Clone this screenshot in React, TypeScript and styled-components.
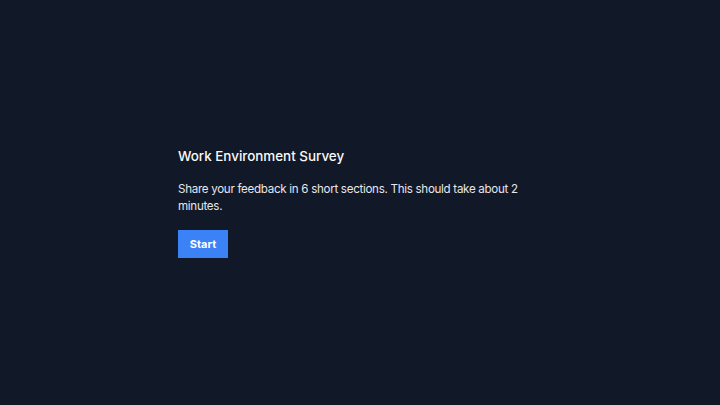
import React from "react";
import styled, { createGlobalStyle } from "styled-components";

const Global = createGlobalStyle`
  html, body { margin: 0; padding: 0; background: #111827; }
  body { font-family: Inter, "Noto Sans", sans-serif; }
  #root { min-height: 100vh; }
`;

const Page = styled.main`
  box-sizing: border-box;
  min-height: 100vh;
  padding-bottom: 2px;
  display: flex;
  align-items: center;
  justify-content: center;
  background: #111827;
`;

const Card = styled.section`
  width: 364px;
  display: flex;
  flex-direction: column;
  align-items: flex-start;
`;

const Title = styled.h1`
  margin: 0 0 15px;
  font-size: 13.4px;
  line-height: 20px;
  font-weight: 500;
  color: #f9fafb;
`;

const Body = styled.p`
  margin: 0 0 15px;
  font-size: 11.6px;
  letter-spacing: -0.3px;
  line-height: 17px;
  color: #e5e7eb;
`;

const Button = styled.button`
  height: 28px;
  width: 50px;
  padding: 0;
  border: none;
  background: #3b82f6;
  color: #fff;
  font-family: inherit;
  font-size: 11px;
  font-weight: 700;
  cursor: pointer;
`;

export default function App() {
  return (
    <>
      <Global />
      <Page>
        <Card>
          <Title>Work Environment Survey</Title>
          <Body>
            Share your feedback in 6 short sections. This should take about 2 minutes.
          </Body>
          <Button>Start</Button>
        </Card>
      </Page>
    </>
  );
}
